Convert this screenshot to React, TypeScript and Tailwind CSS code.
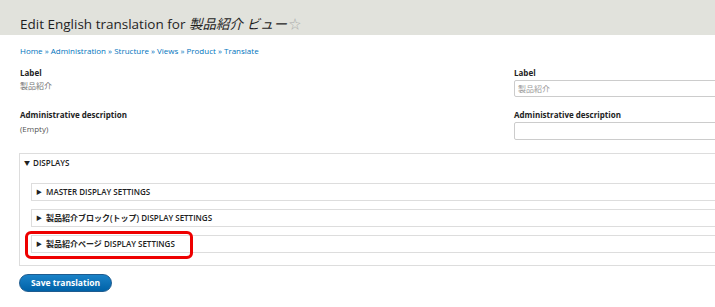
const font = { fontFamily: '"Open Sans", "Noto Sans CJK JP", sans-serif' };

const displays = [
  { id: "master", title: "MASTER DISPLAY SETTINGS", highlight: false },
  { id: "block", title: "製品紹介ブロック(トップ) DISPLAY SETTINGS", highlight: false },
  { id: "page", title: "製品紹介ページ DISPLAY SETTINGS", highlight: true },
];

const crumbs = ["Home", "Administration", "Structure", "Views", "Product", "Translate"];

export default function App() {
  return (
    <div className="w-[715px] h-[307px] overflow-hidden bg-white text-[#333]" style={font}>
      {/* page title band */}
      <div className="h-[35px] bg-[#e1e2dc] pl-[20px] pt-[16px]">
        <h1 className="text-[13.5px] leading-[17px] text-[#1f1f1f] whitespace-nowrap">
          Edit English translation for <em>製品紹介 ビュー</em>
          <span className="ml-[2px] text-[#aaa] text-[12px]">☆</span>
        </h1>
      </div>

      <nav className="mt-[10px] pl-[20px] text-[8px] leading-[12px] whitespace-nowrap">
        {crumbs.map((c, i) => (
          <span key={c}>
            <a className="text-[#0074bd]">{c}</a>
            {i < crumbs.length - 1 && <span className="text-[#0074bd]"> » </span>}
          </span>
        ))}
      </nav>

      <div className="grid grid-cols-[494px_1fr] pl-[20px] mt-[10px]">
        <div>
          <div className="text-[8px] leading-[12px] font-bold text-[#222]">Label</div>
          <div className="mt-[1px] text-[8px] leading-[12px] text-[#777]">製品紹介</div>
          <div className="mt-[17px] text-[8px] leading-[12px] font-bold text-[#222]">Administrative description</div>
          <div className="mt-[2px] text-[8px] leading-[12px] text-[#555]">(Empty)</div>
        </div>
        <div>
          <div className="text-[8px] leading-[12px] font-bold text-[#222]">Label</div>
          <div className="mt-[1px] w-[240px] h-[17px] border border-[#ccc] rounded-[2px] pl-[3px] text-[8px] leading-[15px] text-[#999]">
            製品紹介
          </div>
          <div className="mt-[12px] text-[8px] leading-[12px] font-bold text-[#222]">Administrative description</div>
          <div className="mt-[1px] w-[240px] h-[18px] border border-[#ccc] rounded-[2px]"></div>
        </div>
      </div>

      <div className="ml-[19px] mt-[13px] w-[720px] border border-[#ddd] pt-[3px] pb-[12px]">
        <div className="flex items-center pl-[4px] text-[8px] leading-[12px] text-[#222]">
          <span className="text-[6px] mr-[3px]">▼</span>
          <span className="font-semibold">DISPLAYS</span>
        </div>
        <div className="mt-[14px] ml-[11px] flex flex-col gap-[8px]">
          {displays.map((d) => (
            <div key={d.id} className="relative h-[18px] border border-[#ddd] flex items-center pl-[4px] text-[8px] text-[#222]">
              <span className="text-[6px] mr-[4px]">▶</span>
              <span className="font-semibold">{d.title}</span>
              {d.highlight && (
                <div className="absolute left-[-7px] top-[-5px] w-[168px] h-[28px] border-[3px] border-[#ee0000] rounded-[6px]"></div>
              )}
            </div>
          ))}
        </div>
      </div>

      <div className="mt-[8px] ml-[19px] flex">
        <button className="h-[18px] w-[93px] rounded-full bg-gradient-to-b from-[#1a82c7] to-[#0062a8] border border-[#1e5c90] text-white text-[8.5px] font-bold leading-[16px]">
          Save translation
        </button>
      </div>
    </div>
  );
}
